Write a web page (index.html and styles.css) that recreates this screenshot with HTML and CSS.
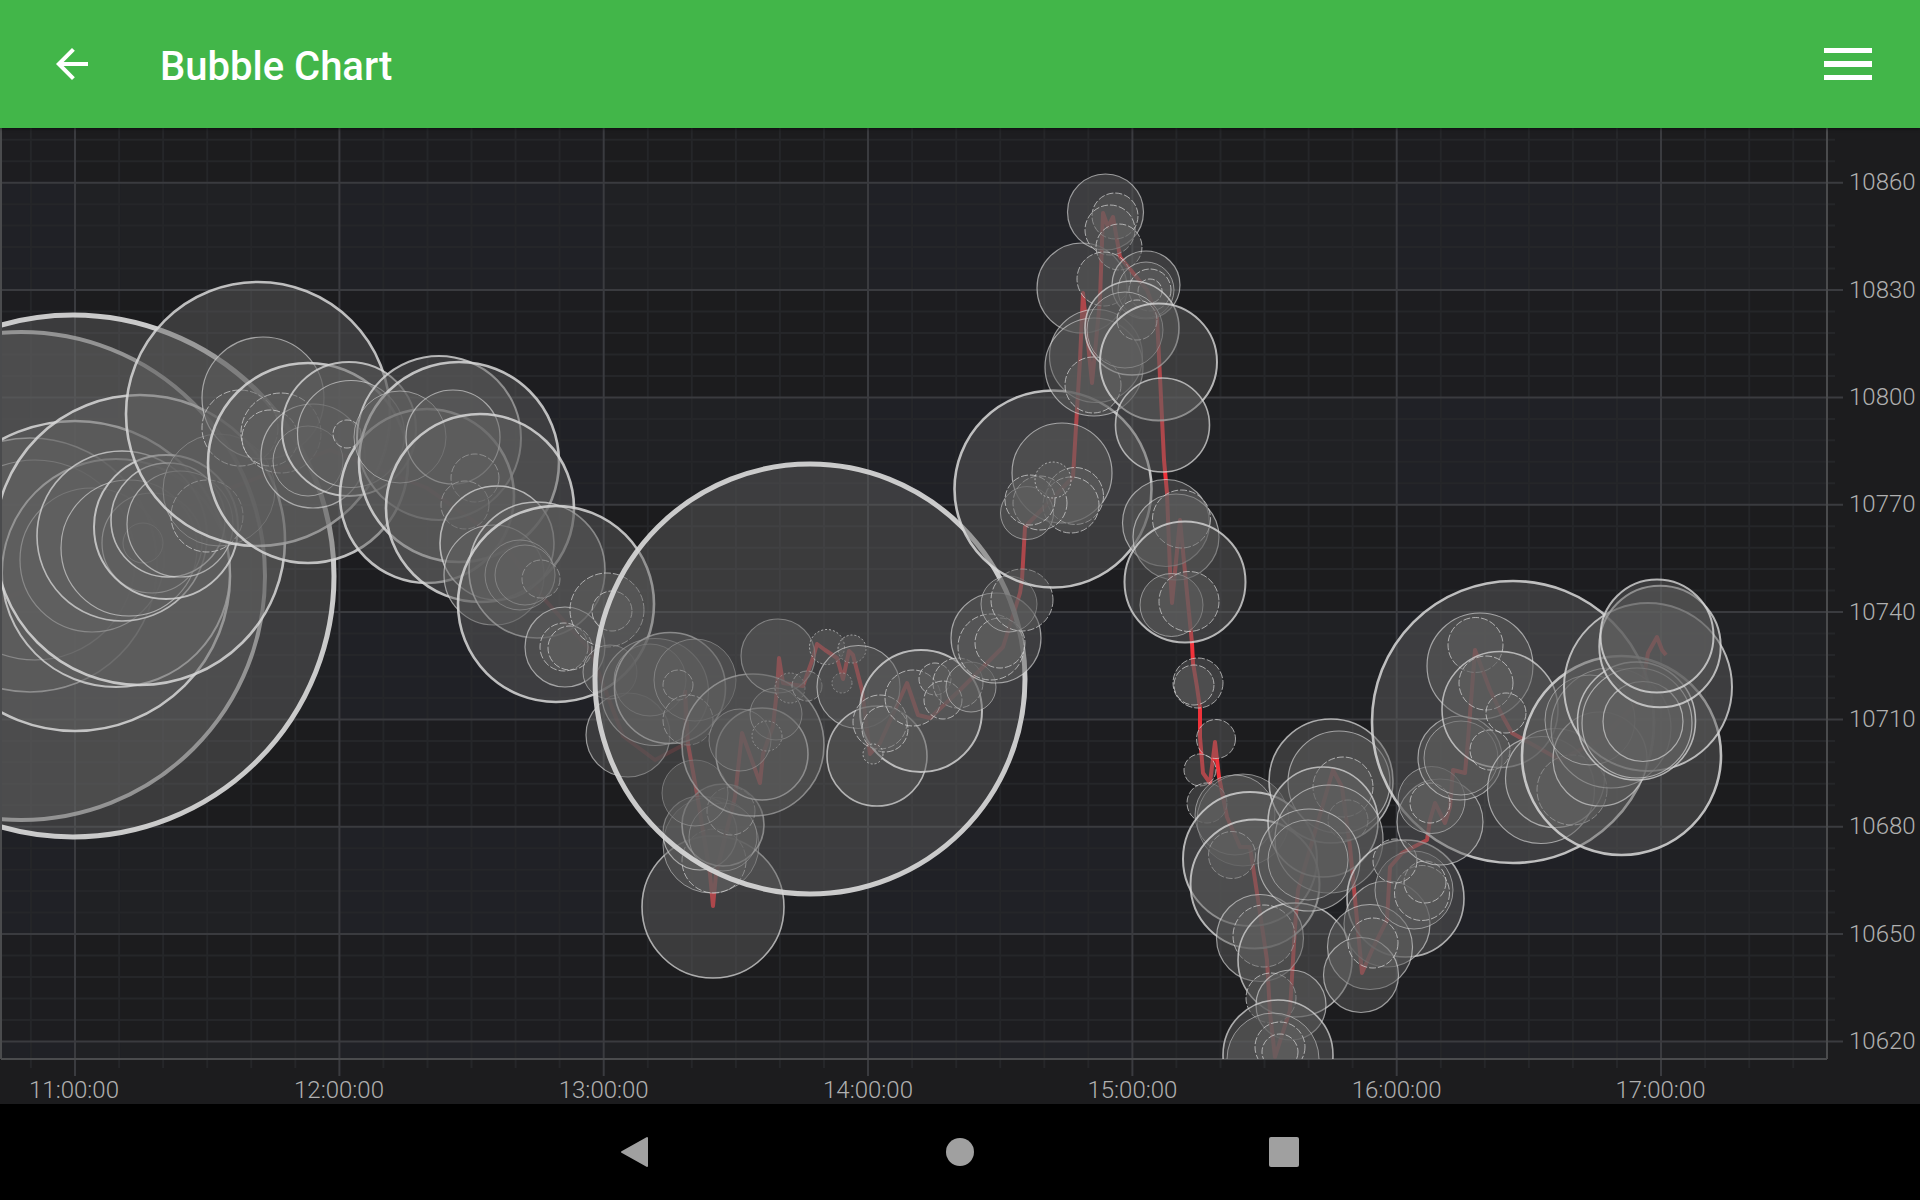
FILE: index.html
```html
<!DOCTYPE html>
<html lang="en">
<head>
  <meta charset="UTF-8">
  <title>Bubble Chart</title>
  <link rel="stylesheet" href="styles.css">
</head>
<body>

<header class="toolbar">
  <svg class="back-icon" viewBox="0 0 24 24"><path d="M20 11H7.83l5.59-5.59L12 4l-8 8 8 8 1.41-1.41L7.83 13H20v-2z"/></svg>
  <h1 class="title">Bubble Chart</h1>
  <div class="menu-icon"><span></span><span></span><span></span></div>
</header>

<main class="chart">
  <svg class="chart-svg" viewBox="0 128 1920 976" width="1920" height="976">
    <defs>
      <clipPath id="plot"><rect x="2" y="128" width="1825" height="931"/></clipPath>
    </defs>

    <!-- alternating bands -->
    <g class="band-x">
      <rect x="2" y="128" width="73" height="931"/>
      <rect x="339.4" y="128" width="264.3" height="931"/>
      <rect x="868" y="128" width="264.4" height="931"/>
      <rect x="1396.7" y="128" width="264.3" height="931"/>
    </g>
    <g class="band-y">
      <rect x="2" y="182.7" width="1825" height="107.4"/>
      <rect x="2" y="397.4" width="1825" height="107.3"/>
      <rect x="2" y="612.1" width="1825" height="107.3"/>
      <rect x="2" y="826.7" width="1825" height="107.4"/>
      <rect x="2" y="1041.4" width="1825" height="17.6"/>
    </g>

    <!-- minor grid and ticks -->
    <path class="grid-minor" d="M30.9 128V1068M119.1 128V1068M163.1 128V1068M207.2 128V1068M251.2 128V1068M295.3 128V1068M383.4 128V1068M427.5 128V1068M471.5 128V1068M515.6 128V1068M559.6 128V1068M647.8 128V1068M691.8 128V1068M735.9 128V1068M779.9 128V1068M824 128V1068M912.1 128V1068M956.2 128V1068M1000.2 128V1068M1044.3 128V1068M1088.3 128V1068M1176.4 128V1068M1220.5 128V1068M1264.5 128V1068M1308.6 128V1068M1352.6 128V1068M1440.8 128V1068M1484.8 128V1068M1528.9 128V1068M1572.9 128V1068M1617 128V1068M1705.1 128V1068M1749.2 128V1068M1793.2 128V1068"/>
    <path class="grid-minor" d="M2 139.8H1835M2 161.2H1835M2 204.2H1835M2 225.6H1835M2 247.1H1835M2 268.6H1835M2 311.5H1835M2 333H1835M2 354.4H1835M2 375.9H1835M2 418.9H1835M2 440.3H1835M2 461.8H1835M2 483.3H1835M2 526.2H1835M2 547.7H1835M2 569.1H1835M2 590.6H1835M2 633.5H1835M2 655H1835M2 676.4H1835M2 697.9H1835M2 740.9H1835M2 762.3H1835M2 783.8H1835M2 805.2H1835M2 848.2H1835M2 869.7H1835M2 891.1H1835M2 912.6H1835M2 955.5H1835M2 977H1835M2 998.5H1835M2 1019.9H1835"/>

    <!-- major grid and ticks -->
    <path class="grid-major" d="M75 128V1076M339.4 128V1076M603.7 128V1076M868 128V1076M1132.4 128V1076M1396.7 128V1076M1661 128V1076"/>
    <path class="grid-major" d="M2 182.7H1843M2 290.1H1843M2 397.4H1843M2 504.7H1843M2 612.1H1843M2 719.4H1843M2 826.7H1843M2 934.1H1843M2 1041.4H1843"/>
    <path class="axis-line" d="M1 128V1059M1 1059H1827M1827 128V1059"/>

    <g clip-path="url(#plot)">
      <polyline class="price-line faint" points="2,600 100,560 200,500 330,450 427,488 500,540 545,600 590,650 623,736 655,760 685,744 685,690"/>
      <polyline class="price-line" points="685,690 688,744 697,794 710,874 713,906 716,874 735,797 742,733 760,783 763,754 773,726 777,690 779,658 783,683 803,686 813,658 817,644 825,650 837,658 843,679 849,651 853,655 862,690 870,754 880,743 907,683 918,715 930,718 960,690 1003,647 1020,593 1022,580 1025,527 1073,477 1076,427 1078,393 1080,360 1083,293 1092,383 1100,300 1103,213 1108,227 1113,217 1120,257 1147,290 1157,317 1160,377 1164,460 1167,493 1170,570 1172,603 1180,520 1187,593 1192,643 1193,663 1197,687 1200,708 1200,737 1203,773 1210,783 1215,742 1219,777 1227,817 1240,847 1250,847 1257,893 1267,960 1270,1013 1275,1057 1290,1010 1295,927 1298,890 1333,770 1342,787 1350,847 1357,920 1362,973 1372,950 1387,920 1390,867 1402,853 1427,840 1430,820 1435,803 1445,823 1450,807 1453,770 1465,773 1468,740 1475,650 1490,690 1503,717 1512,733 1560,760 1600,740 1640,700 1648,653 1657,637 1662,650 1666,655"/>

      <g class="bubbles">
        <circle class="w6" cx="21" cy="576" r="244"/>
        <circle class="w7" cx="73" cy="576" r="261"/>
        <circle class="w3" cx="30" cy="565" r="127"/>
        <circle class="w2" cx="35" cy="560" r="100"/>
        <circle class="w5" cx="75" cy="576" r="155"/>
        <circle class="w4" cx="116" cy="573" r="114"/>
        <circle class="w2" cx="92" cy="560" r="72"/>
        <circle class="w5" cx="140" cy="540" r="145"/>
        <circle class="w3" cx="122" cy="536" r="85"/>
        <circle class="w2" cx="129" cy="548" r="68"/>
        <circle class="w2" cx="152" cy="543" r="50"/>
        <circle class="w1" cx="143" cy="543" r="20"/>
        <circle class="w4" cx="166" cy="527" r="72"/>
        <circle class="w3" cx="168" cy="520" r="57"/>
        <circle class="w2" cx="180" cy="524" r="53"/>
        <circle class="w1" cx="219" cy="490" r="56"/>
        <circle class="d" cx="207" cy="516" r="36"/>
        <circle class="w5" cx="258" cy="414" r="132"/>
        <circle class="w2" cx="263" cy="398" r="61"/>
        <circle class="d" cx="240" cy="428" r="38"/>
        <circle class="w5" cx="308" cy="463" r="100"/>
        <circle class="d" cx="281" cy="433" r="40"/>
        <circle class="d" cx="270" cy="438" r="28"/>
        <circle class="w2" cx="313" cy="456" r="52"/>
        <circle class="w1" cx="308" cy="461" r="35"/>
        <circle class="w4" cx="349" cy="429" r="67"/>
        <circle class="w2" cx="351" cy="434" r="53.5"/>
        <circle class="d" cx="347" cy="434" r="14"/>
        <circle class="w4" cx="439" cy="438" r="82"/>
        <circle class="w5" cx="427" cy="496" r="87"/>
        <circle class="w5" cx="459" cy="462" r="100"/>
        <circle class="w1" cx="400" cy="437" r="46"/>
        <circle class="w2" cx="453" cy="437" r="47"/>
        <circle class="d" cx="475" cy="478" r="24"/>
        <circle class="d" cx="465" cy="505" r="24"/>
        <circle class="w5" cx="480" cy="508" r="94"/>
        <circle class="w3" cx="497" cy="543" r="57"/>
        <circle class="w2" cx="494" cy="575" r="50"/>
        <circle class="w3" cx="537" cy="570" r="68"/>
        <circle class="w1" cx="520" cy="575" r="35"/>
        <circle class="w1" cx="525" cy="575" r="30"/>
        <circle class="d" cx="541" cy="579" r="19"/>
        <circle class="w5" cx="556" cy="604" r="98"/>
        <circle class="w2" cx="565" cy="647" r="40"/>
        <circle class="d" cx="564" cy="647" r="24"/>
        <circle class="d" cx="570" cy="648" r="22"/>
        <circle class="d" cx="607" cy="610" r="37"/>
        <circle class="d" cx="612" cy="611" r="20"/>
        <circle class="w2" cx="628" cy="735" r="42"/>
        <circle class="w1" cx="610" cy="672" r="27"/>
        <circle class="w2" cx="655" cy="692" r="53.5"/>
        <circle class="w1" cx="650" cy="680" r="36"/>
        <circle class="w3" cx="670" cy="688" r="55.5"/>
        <circle class="w1" cx="695" cy="680" r="41"/>
        <circle class="d" cx="678" cy="685" r="15"/>
        <circle class="d" cx="688" cy="720" r="25"/>
        <circle class="w3" cx="713" cy="907" r="71"/>
        <circle class="w1" cx="711" cy="845" r="48"/>
        <circle class="d" cx="714" cy="861" r="32"/>
        <circle class="w2" cx="700" cy="833" r="37"/>
        <circle class="w3" cx="723" cy="825" r="41"/>
        <circle class="w1" cx="723" cy="837" r="34"/>
        <circle class="d" cx="731" cy="811" r="24"/>
        <circle class="w1" cx="695" cy="793" r="33"/>
        <circle class="w3" cx="753" cy="745" r="71"/>
        <circle class="w3" cx="762" cy="754" r="46"/>
        <circle class="w1" cx="740" cy="740" r="31"/>
        <circle class="w2" cx="778" cy="656" r="37"/>
        <circle class="w1" cx="776" cy="714" r="26"/>
        <circle class="s" cx="790" cy="688" r="15"/>
        <circle class="s" cx="767" cy="736" r="15"/>
        <circle class="d" cx="807" cy="686" r="15"/>
        <circle class="w7" cx="810" cy="679" r="215"/>
        <circle class="s" cx="827" cy="647" r="17.5"/>
        <circle class="s" cx="852" cy="649" r="14"/>
        <circle class="s" cx="842" cy="683" r="10"/>
        <circle class="w2" cx="858.5" cy="687" r="41.5"/>
        <circle class="w3" cx="877" cy="756" r="50"/>
        <circle class="w4" cx="921" cy="711" r="61"/>
        <circle class="d" cx="880" cy="722" r="27"/>
        <circle class="d" cx="885" cy="729" r="23"/>
        <circle class="s" cx="873" cy="754" r="10"/>
        <circle class="d" cx="913" cy="698" r="28"/>
        <circle class="d" cx="935" cy="679" r="16"/>
        <circle class="d" cx="958" cy="683" r="25"/>
        <circle class="d" cx="943" cy="700" r="19"/>
        <circle class="w1" cx="971" cy="687" r="25"/>
        <circle class="w2" cx="996" cy="638" r="45"/>
        <circle class="d" cx="991" cy="647" r="33"/>
        <circle class="d" cx="1000" cy="643" r="25"/>
        <circle class="w1" cx="1009" cy="604" r="28"/>
        <circle class="d" cx="1022" cy="600" r="31"/>
        <circle class="w5" cx="1053" cy="489" r="98.5"/>
        <circle class="w2" cx="1062" cy="473" r="50"/>
        <circle class="d" cx="1075" cy="496" r="28.5"/>
        <circle class="d" cx="1071" cy="505" r="28"/>
        <circle class="w1" cx="1027" cy="513" r="26.5"/>
        <circle class="d" cx="1040" cy="503" r="27"/>
        <circle class="d" cx="1030" cy="500" r="25"/>
        <circle class="s" cx="1053" cy="480" r="18"/>
        <circle class="w2" cx="1082" cy="288" r="45"/>
        <circle class="w2" cx="1105.5" cy="212" r="38"/>
        <circle class="d" cx="1115" cy="216" r="23"/>
        <circle class="d" cx="1110" cy="230" r="25"/>
        <circle class="d" cx="1119" cy="247" r="23"/>
        <circle class="d" cx="1104" cy="279" r="27"/>
        <circle class="w2" cx="1096" cy="356" r="46.5"/>
        <circle class="w2" cx="1094" cy="367" r="49"/>
        <circle class="d" cx="1093" cy="385" r="28"/>
        <circle class="w2" cx="1146" cy="285" r="34"/>
        <circle class="w1" cx="1146" cy="290" r="28"/>
        <circle class="d" cx="1150" cy="290" r="21"/>
        <circle class="d" cx="1150" cy="291" r="12"/>
        <circle class="w3" cx="1132" cy="328" r="47"/>
        <circle class="w1" cx="1125" cy="330" r="38"/>
        <circle class="d" cx="1137" cy="320" r="20"/>
        <circle class="w4" cx="1158.5" cy="362" r="58.5"/>
        <circle class="w3" cx="1162.5" cy="425" r="47"/>
        <circle class="w2" cx="1166" cy="523" r="43.5"/>
        <circle class="w2" cx="1176" cy="537" r="43"/>
        <circle class="d" cx="1181.5" cy="519" r="29"/>
        <circle class="w4" cx="1185" cy="582" r="60.5"/>
        <circle class="w1" cx="1171.5" cy="605" r="31.5"/>
        <circle class="d" cx="1189" cy="601.5" r="30"/>
        <circle class="d" cx="1198" cy="683" r="25"/>
        <circle class="d" cx="1194" cy="685" r="20"/>
        <circle class="d" cx="1216" cy="739" r="19.5"/>
        <circle class="d" cx="1200" cy="770" r="16"/>
        <circle class="d" cx="1207" cy="803" r="20"/>
        <circle class="w1" cx="1243" cy="820" r="46"/>
        <circle class="w1" cx="1235" cy="815" r="40"/>
        <circle class="w4" cx="1250" cy="859" r="67"/>
        <circle class="d" cx="1232" cy="855" r="23.5"/>
        <circle class="w4" cx="1255" cy="884" r="64.5"/>
        <circle class="w2" cx="1260" cy="938" r="43.5"/>
        <circle class="d" cx="1264" cy="936" r="31"/>
        <circle class="w3" cx="1295" cy="960" r="57"/>
        <circle class="d" cx="1271" cy="998" r="25"/>
        <circle class="w2" cx="1291" cy="1005" r="35"/>
        <circle class="w3" cx="1278" cy="1055" r="55"/>
        <circle class="w1" cx="1273" cy="1059" r="46"/>
        <circle class="d" cx="1280" cy="1047" r="25"/>
        <circle class="d" cx="1280" cy="1052" r="18"/>
        <circle class="w3" cx="1331" cy="781" r="62"/>
        <circle class="w2" cx="1339" cy="782" r="51"/>
        <circle class="d" cx="1343" cy="787" r="30"/>
        <circle class="d" cx="1348" cy="820" r="20"/>
        <circle class="w3" cx="1323" cy="822" r="55"/>
        <circle class="w2" cx="1329" cy="839" r="54"/>
        <circle class="w2" cx="1309" cy="860" r="51"/>
        <circle class="w1" cx="1308" cy="860" r="40"/>
        <circle class="w3" cx="1405.5" cy="898.5" r="58.5"/>
        <circle class="w2" cx="1387" cy="924" r="43"/>
        <circle class="w2" cx="1370" cy="947" r="42.5"/>
        <circle class="w2" cx="1361" cy="975" r="37.5"/>
        <circle class="d" cx="1373" cy="943" r="25"/>
        <circle class="w1" cx="1414" cy="890" r="39"/>
        <circle class="d" cx="1422" cy="893" r="27.5"/>
        <circle class="d" cx="1425" cy="882" r="21"/>
        <circle class="d" cx="1395" cy="861" r="22"/>
        <circle class="w5" cx="1513" cy="722" r="141"/>
        <circle class="w2" cx="1440" cy="822" r="43"/>
        <circle class="w1" cx="1431.5" cy="800" r="33.5"/>
        <circle class="d" cx="1430" cy="803" r="20"/>
        <circle class="w2" cx="1460" cy="758" r="42"/>
        <circle class="w1" cx="1461" cy="758" r="37"/>
        <circle class="w2" cx="1480" cy="666" r="53"/>
        <circle class="d" cx="1475.5" cy="645" r="27.5"/>
        <circle class="w3" cx="1500" cy="709.5" r="58"/>
        <circle class="d" cx="1486" cy="683" r="27"/>
        <circle class="d" cx="1506" cy="713" r="20"/>
        <circle class="d" cx="1490" cy="750" r="20"/>
        <circle class="w2" cx="1541" cy="790" r="53.5"/>
        <circle class="w2" cx="1555" cy="778" r="49.5"/>
        <circle class="d" cx="1572" cy="790" r="35"/>
        <circle class="w5" cx="1621.5" cy="755.5" r="99.5"/>
        <circle class="w2" cx="1611" cy="728" r="60"/>
        <circle class="w2" cx="1600" cy="759" r="47"/>
        <circle class="w1" cx="1590" cy="720" r="45"/>
        <circle class="w4" cx="1648" cy="687" r="84"/>
        <circle class="w3" cx="1636.5" cy="721" r="59"/>
        <circle class="w2" cx="1637" cy="723" r="55"/>
        <circle class="w2" cx="1643" cy="721.5" r="40"/>
        <circle class="w4" cx="1660" cy="646.5" r="60.7"/>
        <circle class="w4" cx="1657" cy="636" r="56.5"/>
      </g>
    </g>

    <g class="axis-label y-label">
      <text x="1849" y="190">10860</text>
      <text x="1849" y="297.5">10830</text>
      <text x="1849" y="405">10800</text>
      <text x="1849" y="512">10770</text>
      <text x="1849" y="619.5">10740</text>
      <text x="1849" y="727">10710</text>
      <text x="1849" y="834">10680</text>
      <text x="1849" y="941.5">10650</text>
      <text x="1849" y="1049">10620</text>
    </g>
    <g class="axis-label x-label">
      <text x="74" y="1098">11:00:00</text>
      <text x="339" y="1098">12:00:00</text>
      <text x="603.7" y="1098">13:00:00</text>
      <text x="868" y="1098">14:00:00</text>
      <text x="1132.4" y="1098">15:00:00</text>
      <text x="1396.7" y="1098">16:00:00</text>
      <text x="1660.5" y="1098">17:00:00</text>
    </g>
  </svg>
</main>

<nav class="navbar">
  <svg class="nav-icon" viewBox="0 0 48 48"><polygon points="36,10 36,38 11,24"/></svg>
  <svg class="nav-icon" viewBox="0 0 48 48"><circle cx="24" cy="24" r="14"/></svg>
  <svg class="nav-icon" viewBox="0 0 48 48"><rect x="8" y="9" width="30" height="30" rx="2"/></svg>
</nav>

</body>
</html>
```

FILE: styles.css
```css
html, body {
  margin: 0;
  padding: 0;
}
body {
  display: flex;
  flex-direction: column;
  width: 1920px;
  height: 1200px;
  overflow: hidden;
  font-family: Roboto, "Liberation Sans", sans-serif;
  background-color: #000;
}

.toolbar {
  position: relative;
  z-index: 1;
  flex: 0 0 128px;
  display: flex;
  align-items: center;
  padding: 0 48px;
  background-color: #42b649;
  box-shadow: 0 1px 3px rgba(0, 0, 0, 0.5);
}
.back-icon {
  width: 48px;
  height: 48px;
  fill: #fff;
}
.title {
  flex: 1;
  margin: 5px 0 0 64px;
  font-size: 40px;
  font-weight: 500;
  color: #fff;
}
.menu-icon {
  display: flex;
  flex-direction: column;
  gap: 8px;
  width: 48px;
}
.menu-icon span {
  height: 5.33px;
  background-color: #fff;
}

.chart {
  flex: 0 0 976px;
  background-color: #1c1c1e;
}
.chart-svg {
  display: block;
}
.band-x rect {
  fill: #242a3a;
  opacity: 0.1;
}
.band-y rect {
  fill: #2a2e36;
  opacity: 0.25;
}
.grid-minor {
  fill: none;
  stroke: #252629;
  stroke-width: 2;
}
.grid-major {
  fill: none;
  stroke: #3a3b3f;
  stroke-width: 2;
}
.axis-line {
  fill: none;
  stroke: #4a4b4d;
  stroke-width: 2;
}
.price-line {
  fill: none;
  stroke: #f0323a;
  stroke-width: 4;
  stroke-linejoin: round;
}
.price-line.faint {
  opacity: 0.25;
}

.bubbles circle {
  fill: rgba(96, 96, 96, 0.46);
  stroke: #d8d8d8;
}
.bubbles .w1 { stroke-width: 1; stroke-opacity: 0.55; }
.bubbles .w2 { stroke-width: 1.2; stroke-opacity: 0.65; }
.bubbles .w3 { stroke-width: 1.6; stroke-opacity: 0.75; }
.bubbles .w4 { stroke-width: 2; stroke-opacity: 0.8; }
.bubbles .w5 { stroke-width: 2.6; stroke-opacity: 0.85; }
.bubbles .w6 { stroke-width: 4; stroke-opacity: 0.85; }
.bubbles .w7 { stroke-width: 5; stroke-opacity: 0.92; }
.bubbles .d {
  stroke-width: 1;
  stroke-opacity: 0.7;
  stroke-dasharray: 7 2;
}
.bubbles .s {
  stroke-width: 1;
  stroke-opacity: 0.7;
  stroke-dasharray: 2 2;
}

.axis-label {
  font-size: 24px;
  font-weight: 300;
  fill: #b0b0b0;
}
.x-label {
  text-anchor: middle;
}

.navbar {
  flex: 0 0 96px;
  display: flex;
  justify-content: center;
  align-items: center;
  gap: 277px;
  background-color: #000;
}
.nav-icon {
  width: 48px;
  height: 48px;
  fill: #a0a0a0;
  stroke: #a0a0a0;
  stroke-width: 2;
  stroke-linejoin: round;
}
.nav-icon rect,
.nav-icon circle {
  stroke: none;
}
```
